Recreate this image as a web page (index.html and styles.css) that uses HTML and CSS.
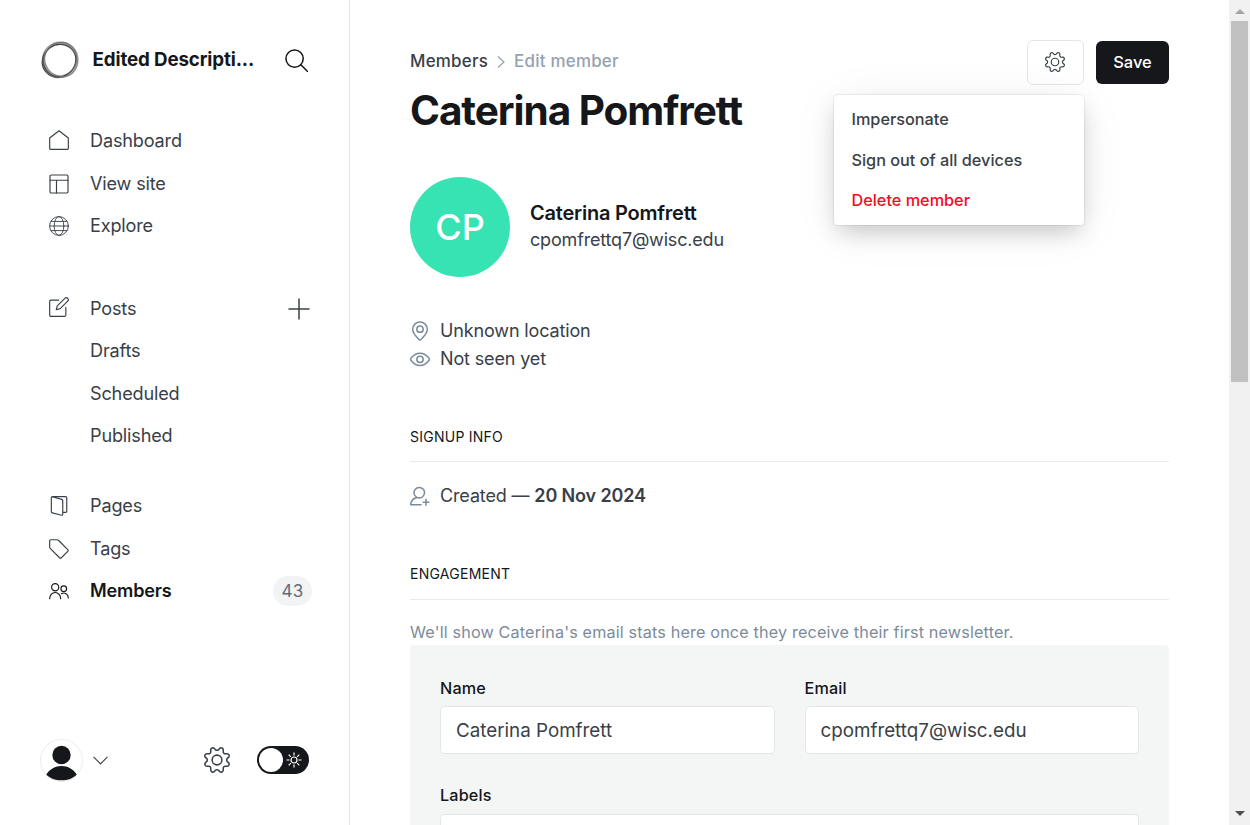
FILE: index.html
```html
<!DOCTYPE html>
<html lang="en">
<head>
<meta charset="utf-8">
<title>Edit member</title>
<link rel="stylesheet" href="styles.css">
</head>
<body>
<svg class="defs" width="0" height="0">
  <symbol id="gear" viewBox="0 0 24 24"><path d="M10.546 2.438a1.957 1.957 0 0 0 2.908 0L14.4 1.4a1.959 1.959 0 0 1 3.41 1.413l-.071 1.4a1.958 1.958 0 0 0 2.051 2.054l1.4-.071a1.959 1.959 0 0 1 1.41 3.41l-1.042.94a1.96 1.96 0 0 0 0 2.909l1.042.94a1.959 1.959 0 0 1-1.413 3.41l-1.4-.071a1.958 1.958 0 0 0-2.056 2.056l.071 1.4A1.959 1.959 0 0 1 14.4 22.6l-.941-1.041a1.959 1.959 0 0 0-2.908 0L9.606 22.6A1.959 1.959 0 0 1 6.2 21.192l.072-1.4a1.958 1.958 0 0 0-2.056-2.056l-1.4.071A1.958 1.958 0 0 1 1.4 14.4l1.041-.94a1.961 1.961 0 0 0 0-2.909L1.4 9.606A1.958 1.958 0 0 1 2.813 6.2l1.4.071a1.958 1.958 0 0 0 2.056-2.06L6.2 2.81A1.959 1.959 0 0 1 9.606 1.4Z"/><circle cx="12" cy="12" r="4.5"/></symbol>
</svg>
<div class="app">
  <aside class="sidebar">
    <header class="site">
      <svg class="site-logo" viewBox="0 0 40 40">
        <g fill="none">
          <ellipse cx="20.300" cy="19.800" rx="16.900" ry="16.800" stroke="#a9a9a9" stroke-width="3"/>
          <ellipse cx="19" cy="20.800" rx="17.300" ry="15.800" transform="rotate(-35 19 20.800)" stroke="#444" stroke-width="1.200"/>
          <ellipse cx="21" cy="19.800" rx="17.500" ry="16" transform="rotate(60 21 19.800)" stroke="#888" stroke-width="1.200"/>
          <ellipse cx="20" cy="20" rx="18.300" ry="16" transform="rotate(-60 20 20)" stroke="#666" stroke-width=".8"/>
          <path d="M3 17C2 27 8 37 20 37.300" stroke="#555" stroke-width="1.500"/>
        </g>
      </svg>
      <span class="site-name">Edited Descripti...</span>
      <svg class="icon search" viewBox="0 0 24 24"><circle cx="10" cy="10" r="9"/><path d="M16.500 16.500L23.300 23.300"/></svg>
    </header>
    <nav>
      <ul class="nav-group">
        <li><svg class="icon home" viewBox="0 0 24 24"><path d="M.8 9.700 12 .9l11.200 8.800v12.500a1 1 0 0 1-1 1H1.800a1 1 0 0 1-1-1z"/></svg>Dashboard</li>
        <li><svg class="icon" viewBox="0 0 24 24"><rect x="1.200" y="1.200" width="21.600" height="21.600" rx="1.500"/><path d="M1.200 7.500h21.600M9 7.500v15.300"/></svg>View site</li>
        <li><svg class="icon globe" viewBox="0 0 24 24"><circle cx="12" cy="12" r="11.250"/><ellipse cx="12" cy="12" rx="5.800" ry="11.250"/><path d="M.8 12h22.400M2.400 6.500h19.200M2.400 17.500h19.200"/></svg>Explore</li>
      </ul>
      <ul class="nav-group nav-posts">
        <li><svg class="icon icon-up" viewBox="0 0 24 24"><path d="M20.200 12.500v9.200a1.500 1.500 0 0 1-1.500 1.500H2.300a1.500 1.500 0 0 1-1.500-1.500V5.300a1.500 1.500 0 0 1 1.500-1.500h9.200"/><path d="M10 10.600 19 1.600a2.350 2.350 0 0 1 3.400 3.400l-9 9-4.700 1.300z"/></svg>Posts<svg class="plus" viewBox="0 0 24 24"><path d="M12 1.500v21M1.500 12h21"/></svg></li>
        <li class="sub">Drafts</li>
        <li class="sub">Scheduled</li>
        <li class="sub">Published</li>
      </ul>
      <ul class="nav-group nav-content">
        <li><svg class="icon" viewBox="0 0 24 24"><path d="M3.800.9 15.300 4a1.500 1.500 0 0 1 1.200 1.500v16.400a1.200 1.200 0 0 1-1.500 1.200L4 20.200A1.500 1.500 0 0 1 2.800 18.700V2.200A1.400 1.400 0 0 1 4.200.8h15.600a1.500 1.500 0 0 1 1.500 1.500v15.900a1.500 1.500 0 0 1-1.500 1.500h-3.300"/></svg>Pages</li>
        <li><svg class="icon" viewBox="0 0 24 24"><path d="M2.300.9h7.200a3 3 0 0 1 2.100.9l10.900 10.900a1.500 1.500 0 0 1 0 2.100l-7.700 7.700a1.500 1.500 0 0 1-2.100 0L1.700 11.600a3 3 0 0 1-.9-2.100V2.400A1.500 1.500 0 0 1 2.300.9z"/></svg>Tags</li>
        <li class="active"><svg class="icon" viewBox="0 0 24 24"><circle cx="7.400" cy="7.500" r="4.300"/><path d="M.8 21.200c0-4.200 2.800-7.400 6.600-7.400s6.600 3.200 6.600 7.400"/><circle cx="17.700" cy="9.200" r="3.400"/><path d="M14.800 15.200c4-2.200 8.400.5 8.400 5.200"/></svg>Members<span class="count">43</span></li>
      </ul>
    </nav>
    <footer class="side-foot">
      <svg class="user" viewBox="0 0 43 43"><circle cx="21.500" cy="21.500" r="21" fill="#fff" stroke="#e9ebee"/><circle cx="21.500" cy="16" r="9.200" fill="#15171a"/><path d="M6.300 35.500C10 30 15 27 21.500 27s11.500 3 15.200 8.500C33 39.500 28 41.300 21.500 41.300S10 39.500 6.300 35.500z" fill="#15171a"/></svg>
      <svg class="chev" viewBox="0 0 14 8"><path d="M.5.6 7 7.200 13.500.6"/></svg>
      <svg class="icon cog"><use href="#gear"/></svg>
      <span class="toggle"><i class="knob"></i><svg class="sun" viewBox="0 0 16 16"><circle cx="8" cy="8" r="3"/><path d="M8 .5v3M8 12.500v3M.5 8h3M12.500 8h3M2.700 2.700l2.100 2.100M11.200 11.200l2.100 2.100M2.700 13.300l2.100-2.100M11.200 4.800l2.100-2.100"/></svg></span>
    </footer>
  </aside>

  <main class="main">
    <header class="page-head">
      <div>
        <div class="crumbs"><span>Members</span><svg class="sep" viewBox="0 0 8 12"><path d="M1 .5l6 5.500-6 5.500"/></svg><span class="current">Edit member</span></div>
        <h1>Caterina Pomfrett</h1>
      </div>
      <div class="actions">
        <button class="btn btn-gear"><svg class="icon"><use href="#gear"/></svg></button>
        <button class="btn btn-save">Save</button>
        <ul class="menu">
          <li>Impersonate</li>
          <li>Sign out of all devices</li>
          <li class="danger">Delete member</li>
        </ul>
      </div>
    </header>

    <section class="profile">
      <div class="avatar">CP</div>
      <div>
        <div class="name">Caterina Pomfrett</div>
        <div class="mail">cpomfrettq7@wisc.edu</div>
      </div>
    </section>
    <div class="meta">
      <p><svg class="mico" viewBox="0 0 24 24"><path d="M12 1.200a8.800 8.800 0 0 1 8.800 8.800c0 4.200-5.100 9.800-7.700 12.300a1.600 1.600 0 0 1-2.200 0C8.300 19.800 3.200 14.200 3.200 10A8.800 8.800 0 0 1 12 1.200z"/><circle cx="12" cy="9.800" r="3.800"/></svg>Unknown location</p>
      <p><svg class="mico" viewBox="0 0 24 24"><path d="M12 5.100c4.100 0 8.200 2.600 10.700 5.800a2.200 2.200 0 0 1 0 2.800c-2.500 3.200-6.600 6-10.700 6S3.800 16.900 1.300 13.700a2.200 2.200 0 0 1 0-2.800c2.500-3.200 6.600-5.800 10.700-5.800z"/><circle cx="12" cy="12.400" r="3.800"/></svg>Not seen yet</p>
    </div>

    <h4 class="signup">Signup info</h4>
    <p class="created"><svg class="mico" viewBox="0 0 24 24"><path d="M8.300 13.700a6.300 6.300 0 1 1 5.800-.1M8.300 13.700C4 14.700 1 18.200.9 22.500h12.300M8.300 13.700c1.800.6 4 .7 5.800-.1M19.200 16v7M15.700 19.500h7"/></svg><span>Created — <b>20 Nov 2024</b></span></p>
    <h4 class="engagement">Engagement</h4>
    <p class="note">We'll show Caterina's email stats here once they receive their first newsletter.</p>

    <form class="card">
      <div class="field"><label>Name</label><div class="input">Caterina Pomfrett</div></div>
      <div class="field"><label>Email</label><div class="input">cpomfrettq7@wisc.edu</div></div>
      <div class="field wide"><label>Labels</label><div class="input"></div></div>
    </form>
  </main>

  <div class="scrollbar"><i class="up"></i><i class="thumb"></i><i class="down"></i></div>
</div>
</body>
</html>
```
FILE: styles.css
```css
* { box-sizing: border-box; }
body { margin: 0; font-family: Inter, "Liberation Sans", sans-serif; font-size: 18px; font-weight: 400; color: #394047; background: #fff; }
ul, p, h1, h4 { margin: 0; padding: 0; list-style: none; }
svg { display: block; flex: none; fill: none; }
.defs { position: absolute; }
.app { display: flex; height: 825px; overflow: hidden; }

.sidebar { width: 350px; flex: none; border-right: 1px solid #e6e9eb; display: flex; flex-direction: column; padding: 40px 37px 43px 40px; }
.site { display: flex; align-items: center; height: 40px; }
.site-logo { width: 40px; height: 40px; }
.site-name { margin-left: 12.500px; padding-bottom: 2px; font-size: 18.75px; font-weight: 700; letter-spacing: -.13px; color: #15171a; flex: 1; white-space: nowrap; }
.icon { width: 20px; height: 20px; stroke: #394047; stroke-width: 1.4; stroke-linejoin: round; stroke-linecap: round; }
.search { width: 23px; height: 23px; stroke: #15171a; stroke-width: 1.6; margin-right: 4.500px; }
nav { padding-top: 39px; flex: 1; }
.nav-group li { height: 42.5px; display: flex; align-items: center; padding-left: 9px; font-size: 18.1px; letter-spacing: -.17px; line-height: 24px; }
.nav-group li .icon { margin-right: 21px; margin-top: 1.5px; }
.nav-group li .home { margin-top: 0; }
.nav-group li .globe { stroke-width: 1.1; }
.nav-group li .icon-up { margin-top: -2px; }
.nav-group .sub { padding-left: 50px; }
.nav-posts { margin-top: 40px; }
.nav-content { margin-top: 27.500px; }
.plus { width: 24px; height: 24px; stroke: #394047; stroke-width: 1.5; margin: 2px 1px 0 auto; }
.nav-group .active { font-weight: 600; color: #15171a; }
.active .icon { stroke: #15171a; }
.count { margin: 1px 0 0 auto; width: 39px; text-align: center; height: 30px; line-height: 30px; border-radius: 15px; background: #f1f3f5; color: #626d79; font-size: 17px; letter-spacing: .3px; font-weight: 400; }
.side-foot { display: flex; align-items: center; height: 43px; }
.user { width: 43px; height: 43px; }
.chev { width: 15px; height: 9px; stroke: #394047; margin-left: 10px; }
.side-foot .cog { width: 26px; height: 26px; margin: 0 0 1px 95.500px; }
.toggle { width: 52px; height: 28px; border-radius: 14px; background: #15171a; margin: 0 0 1px 27.500px; display: flex; align-items: center; padding-left: 2px; }
.knob { width: 24px; height: 24px; border-radius: 50%; background: #fff; }
.sun { width: 16px; height: 16px; margin-left: 3px; stroke: #fff; stroke-width: 1.2; }

.main { width: 879px; flex: none; padding: 40px 60px 0; }
.page-head { display: flex; justify-content: space-between; height: 137px; }
.crumbs { display: flex; align-items: center; height: 24px; margin-top: 9px; font-size: 16.9px; font-weight: 500; letter-spacing: .25px; }
.sep { width: 8px; height: 12px; stroke: #8e9cac; stroke-width: 1.1; margin: 2px 9.500px 0 8.500px; }
.current { color: #95a1b1; }
h1 { font-size: 40.5px; line-height: 50px; margin-top: 12.500px; font-weight: 700; letter-spacing: -1.05px; color: #15171a; }
.actions { position: relative; display: flex; align-items: center; height: 45px; gap: 12px; }
.btn { font: 500 16.5px Inter, "Liberation Sans", sans-serif; border: 0; padding: 0; border-radius: 6px; display: flex; align-items: center; justify-content: center; }
.btn-gear { width: 57px; height: 45px; background: #fff; border: 1px solid #e3e6e9; padding: 0 1.5px 1px 0; }
.btn-save { width: 73px; height: 43px; background: #15171a; color: #fff; padding-bottom: 2px; }
.menu { position: absolute; top: 55px; right: 85px; width: 250px; height: 130px; padding: 4px 0; border-radius: 4px; background: #fff; box-shadow: 0 0 0 1px rgba(0,0,0,.06), 0 10px 22px -4px rgba(0,0,0,.2), 0 6px 50px rgba(0,0,0,.06); }
.menu li { height: 40.600px; line-height: 41px; padding-left: 17.5px; font-size: 16.25px; font-weight: 500; }
.menu .danger { color: #f50b23; }
.profile { display: flex; align-items: center; height: 100px; }
.avatar { width: 100px; height: 100px; border-radius: 50%; background: #37e3b2; color: #fff; font-size: 36px; font-weight: 500; line-height: 100px; text-align: center; margin-right: 20px; }
.name { font-size: 20px; font-weight: 600; letter-spacing: -.23px; color: #15171a; line-height: 28px; margin-top: -3px; }
.mail { line-height: 26px; font-size: 18px; letter-spacing: -.18px; }
.meta { margin-top: 39px; }
.meta p, .created { display: flex; align-items: center; height: 28px; font-size: 18px; letter-spacing: -.14px; }
.mico { width: 20px; height: 20px; margin: 2px 10px 0 0; stroke: #7c8b9a; stroke-width: 1.8; stroke-linecap: round; stroke-linejoin: round; }
h4 { font-size: 14px; font-weight: 400; line-height: 20px; text-transform: uppercase; color: #15171a; letter-spacing: .25px; border-bottom: 1px solid #e8ebed; padding-bottom: 14px; }
.signup { margin-top: 55px; }
.created { margin-top: 19px; }
.created b { font-weight: 600; }
.engagement { margin-top: 55px; padding-bottom: 15px; }
.note { margin-top: 20px; line-height: 24px; margin-bottom: 1px; font-size: 16.2px; color: #7c8b9a; letter-spacing: .15px; }
.card { background: #f4f6f6; border-radius: 4px; height: 260px; padding: 30px; display: grid; grid-template-columns: 1fr 1fr; column-gap: 30px; align-content: start; }
.field { height: 108px; }
.wide { grid-column: 1 / 3; }
label { display: block; height: 31px; line-height: 26px; font-size: 16.2px; font-weight: 500; color: #15171a; letter-spacing: .15px; }
.wide label { line-height: 24px; }
.input { height: 48px; border: 1px solid #e3e7e9; border-radius: 5px; background: #fff; padding-left: 15px; line-height: 47.5px; font-size: 18.800px; }
.scrollbar { width: 21px; background: #f1f1f1; display: flex; flex-direction: column; align-items: center; }
.up, .down { border: 5px solid transparent; flex: none; }
.up { border-top: 0; border-bottom-color: #a3a3a3; margin-top: 9px; }
.down { border-bottom: 0; border-top-color: #505050; margin: auto 0 9px; }
.thumb { width: 17px; height: 361px; background: #c1c1c1; margin-top: 7px; }
```
